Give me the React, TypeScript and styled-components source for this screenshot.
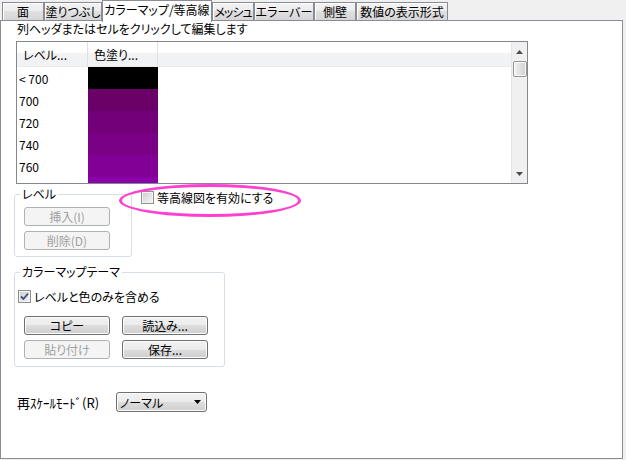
import React from "react";
import styled, { createGlobalStyle, css } from "styled-components";

const GlobalStyle = createGlobalStyle`
  html, body { margin: 0; padding: 0; }
  body {
    background: #f0f0f0;
    font-family: "Noto Sans CJK JP", "Liberation Sans", sans-serif;
    font-size: 12px;
    color: #000;
    font-feature-settings: "palt";
  }
  * { box-sizing: border-box; }
`;

const Window = styled.div`
  width: 626px;
  height: 460px;
  display: flex;
  flex-direction: column;
  background: #f0f0f0;
`;

const TabBar = styled.div`
  display: flex;
  align-items: flex-end;
  height: 20px;
  padding-left: 2px;
`;

const Tab = styled.div<{ $w: number; $active?: boolean; $tight?: boolean }>`
  width: ${(p) => p.$w}px;
  height: 18px;
  border: 1px solid #898c95;
  border-bottom: none;
  background: linear-gradient(#f3f3f3, #ececec 50%, #e0e0e0 50%, #d6d6d6);
  box-shadow: inset 1px 1px 0 #ffffff;
  display: flex;
  align-items: center;
  justify-content: center;
  line-height: 14px;
  white-space: nowrap;
  letter-spacing: ${(p) => (p.$tight ? "-1px" : "0")};
  ${(p) =>
    p.$active &&
    css`
      height: 22px;
      margin-bottom: -2px;
      background: #ffffff;
      box-shadow: none;
      position: relative;
      z-index: 1;
      padding-bottom: 3px;
    `}
`;

const Panel = styled.div`
  width: 623px;
  height: 439px;
  border: 1px solid #898c95;
  background: #ffffff;
  padding: 1px 0 0 15px;
  display: flex;
  flex-direction: column;
  align-items: flex-start;
`;

const Hint = styled.div`
  line-height: 14px;
  margin-left: 1px;
  white-space: nowrap;
`;

const Grid = styled.div`
  margin-top: 5px;
  width: 512px;
  height: 143px;
  border: 1px solid #828790;
  display: flex;
  overflow: hidden;
`;

const GridBody = styled.div`
  flex: 1;
  display: flex;
  flex-direction: column;
  overflow: hidden;
`;

const HeaderRow = styled.div`
  display: flex;
  height: 25px;
  flex: none;
  background: linear-gradient(#ffffff 0, #ffffff 44%, #f1f2f4 44%, #f1f2f4 100%);
  border-bottom: 1px solid #e8e9eb;
`;

const HeaderCell = styled.div<{ $w: number }>`
  width: ${(p) => p.$w}px;
  flex: none;
  border-right: 1px solid #dfe1e4;
  padding-left: 6px;
  display: flex;
  align-items: center;
  white-space: nowrap;
`;

const HeaderFill = styled.div`
  flex: 1;
`;

const Row = styled.div`
  display: flex;
  height: 22px;
  flex: none;
`;

const LevelCell = styled.div`
  width: 71px;
  flex: none;
  padding-left: 2px;
  display: flex;
  align-items: center;
  white-space: nowrap;
`;

const Swatch = styled.div<{ $c: string }>`
  width: 70px;
  flex: none;
  background: ${(p) => p.$c};
`;

const ScrollBar = styled.div`
  width: 16px;
  flex: none;
  background: #f0f0f0;
  border-left: 1px solid #e6e6e6;
  display: flex;
  flex-direction: column;
  align-items: center;
`;

const ArrowBox = styled.div`
  height: 19px;
  width: 100%;
  display: flex;
  align-items: center;
  justify-content: center;
  flex: none;
`;

const Thumb = styled.div`
  width: 14px;
  height: 16px;
  border: 1px solid #959595;
  border-radius: 2px;
  background: linear-gradient(90deg, #f3f3f3, #e2e2e2 45%, #d0d0d0 100%);
  box-shadow: inset 0 0 0 1px #fbfbfb;
  flex: none;
`;

const Track = styled.div`
  flex: 1;
`;

const Middle = styled.div`
  display: flex;
  align-items: flex-start;
  margin-top: 3px;
  margin-left: -2px;
`;

const Group = styled.fieldset<{ $w: number }>`
  width: ${(p) => p.$w}px;
  margin: 0;
  border: 1px solid #d5dfe5;
  border-radius: 3px;
  padding: 0 0 6px 9px;
  display: flex;
  flex-direction: column;
  align-items: flex-start;
  box-shadow: inset 1px 1px 0 #ffffff;
`;

const Legend = styled.legend`
  padding: 0 2px;
  margin-left: -4px;
  line-height: 14px;
  white-space: nowrap;
`;

const Stack = styled.div`
  display: flex;
  flex-direction: column;
  gap: 5px;
  margin-top: 6px;
`;

const Button = styled.button`
  width: 86px;
  height: 19px;
  padding: 0;
  border: 1px solid #707070;
  border-radius: 3px;
  background: linear-gradient(#f2f2f2, #ebebeb 50%, #dddddd 50%, #cfcfcf);
  box-shadow: inset 0 0 0 1px #fcfcfc;
  font: inherit;
  color: #000;
  line-height: 14px;
  display: flex;
  align-items: center;
  justify-content: center;
  &:disabled {
    border-color: #adb2b5;
    background: #f4f4f4;
    color: #a0a0a0;
    box-shadow: none;
  }
`;

const CheckLabel = styled.label<{ $highlight?: boolean }>`
  display: flex;
  align-items: center;
  gap: 3px;
  height: 13px;
  white-space: nowrap;
  position: relative;
  ${(p) =>
    p.$highlight &&
    css`
      margin-left: 9px;
      margin-top: 4px;
      &::before {
        content: "";
        position: absolute;
        left: -22px;
        top: -7px;
        width: 176px;
        height: 27px;
        border: 3px solid #ff3fd0;
        border-radius: 50%;
        pointer-events: none;
      }
    `}
`;

const Box = styled.span`
  width: 13px;
  height: 13px;
  border: 1px solid #8e8f8f;
  background: linear-gradient(135deg, #cbcbcb, #f7f7f7);
  box-shadow: inset 0 0 0 1px #f4f4f4;
  display: flex;
  align-items: center;
  justify-content: center;
  flex: none;
`;

const ThemeBody = styled.div`
  display: flex;
  flex-direction: column;
  align-items: flex-start;
  margin-left: -6px;
  margin-top: 11px;
`;

const ButtonGrid = styled.div`
  display: grid;
  grid-template-columns: 86px 86px;
  column-gap: 12px;
  row-gap: 5px;
  margin-top: 13px;
  margin-left: 6px;
`;

const ThemeGroup = styled(Group)`
  margin-top: 8px;
  margin-left: -2px;
  padding-bottom: 7px;
`;

const RescaleRow = styled.div`
  display: flex;
  align-items: center;
  margin-top: 25px;
  margin-left: 1px;
`;

const RescaleLabel = styled.span`
  width: 99px;
  white-space: nowrap;
  font-size: 13px;
  font-feature-settings: normal;
`;

const Select = styled.div`
  width: 91px;
  height: 20px;
  border: 1px solid #707070;
  border-radius: 3px;
  background: linear-gradient(#f2f2f2, #ebebeb 50%, #dddddd 50%, #cfcfcf);
  box-shadow: inset 0 0 0 1px #fcfcfc;
  display: flex;
  align-items: center;
  justify-content: space-between;
  padding: 0 5px 0 3px;
`;

const Check = () => (
  <svg width="9" height="9" viewBox="0 0 9 9">
    <path d="M1 4.5 L3.5 7 L8 1.5" fill="none" stroke="#3a4d7f" strokeWidth="1.8" />
  </svg>
);

const Tri = ({ up, color = "#4d4d4d" }: { up?: boolean; color?: string }) => (
  <svg width="7" height="4" viewBox="0 0 7 4">
    <path d={up ? "M0 4 L3.5 0 L7 4 Z" : "M0 0 L7 0 L3.5 4 Z"} fill={color} />
  </svg>
);

const tabs = [
  { label: "面", w: 42 },
  { label: "塗りつぶし", w: 58 },
  { label: "カラーマップ/等高線", w: 110, active: true },
  { label: "メッシュ", w: 42, tight: true },
  { label: "エラーバー", w: 60 },
  { label: "側壁", w: 42 },
  { label: "数値の表示形式", w: 92 },
];

const rows = [
  { label: "< 700", color: "#000000" },
  { label: "700", color: "#6b0068" },
  { label: "720", color: "#730078" },
  { label: "740", color: "#7a0086" },
  { label: "760", color: "#830097" },
  { label: "", color: "#8a00a8" },
];

export default function App() {
  return (
    <>
      <GlobalStyle />
      <Window>
        <TabBar>
          {tabs.map((t) => (
            <Tab key={t.label} $w={t.w} $active={t.active} $tight={t.tight}>
              {t.label}
            </Tab>
          ))}
        </TabBar>
        <Panel>
          <Hint>列ヘッダまたはセルをクリックして編集します</Hint>
          <Grid>
            <GridBody>
              <HeaderRow>
                <HeaderCell $w={71}>レベル...</HeaderCell>
                <HeaderCell $w={70}>色塗り...</HeaderCell>
                <HeaderFill />
              </HeaderRow>
              {rows.map((r, i) => (
                <Row key={i}>
                  <LevelCell>{r.label}</LevelCell>
                  <Swatch $c={r.color} />
                </Row>
              ))}
            </GridBody>
            <ScrollBar>
              <ArrowBox>
                <Tri up />
              </ArrowBox>
              <Thumb />
              <Track />
              <ArrowBox>
                <Tri />
              </ArrowBox>
            </ScrollBar>
          </Grid>
          <Middle>
            <Group $w={118}>
              <Legend>レベル</Legend>
              <Stack>
                <Button disabled>挿入(I)</Button>
                <Button disabled>削除(D)</Button>
              </Stack>
            </Group>
            <CheckLabel $highlight>
              <Box />
              等高線図を有効にする
            </CheckLabel>
          </Middle>
          <ThemeGroup $w={211}>
            <Legend>カラーマップテーマ</Legend>
            <ThemeBody>
              <CheckLabel>
                <Box>
                  <Check />
                </Box>
                レベルと色のみを含める
              </CheckLabel>
              <ButtonGrid>
                <Button>コピー</Button>
                <Button>読込み...</Button>
                <Button disabled>貼り付け</Button>
                <Button>保存...</Button>
              </ButtonGrid>
            </ThemeBody>
          </ThemeGroup>
          <RescaleRow>
            <RescaleLabel>再ｽｹｰﾙﾓｰﾄﾞ(R)</RescaleLabel>
            <Select>
              <span>ノーマル</span>
              <Tri color="#000" />
            </Select>
          </RescaleRow>
        </Panel>
      </Window>
    </>
  );
}
